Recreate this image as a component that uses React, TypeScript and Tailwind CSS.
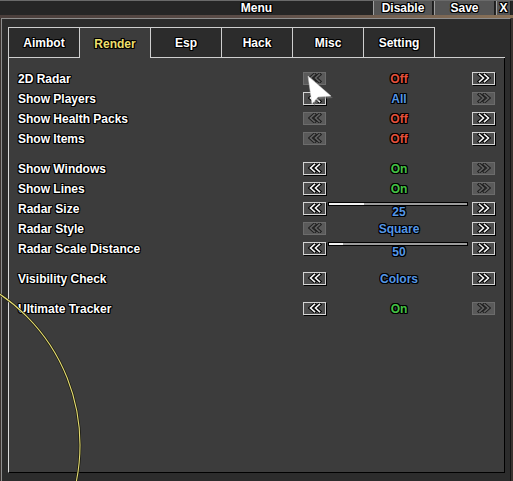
import React from 'react';

// black 1px outline round the pixel-style text
const OUTLINE =
  '[text-shadow:-1px_0_0_#000,1px_0_0_#000,0_-1px_0_#000,0_1px_0_#000,1px_1px_0_#000,-1px_-1px_0_#000,1px_-1px_0_#000,-1px_1px_0_#000]';

type Row =
  | { spacer: true }
  | {
      spacer?: false;
      label: string;
      value: string;
      color: 'red' | 'blue' | 'green';
      left: boolean;
      right: boolean;
      slider?: number;
    };

const rows: Row[] = [
  { label: '2D Radar', value: 'Off', color: 'red', left: false, right: true },
  { label: 'Show Players', value: 'All', color: 'blue', left: true, right: false },
  { label: 'Show Health Packs', value: 'Off', color: 'red', left: false, right: true },
  { label: 'Show Items', value: 'Off', color: 'red', left: false, right: true },
  { spacer: true },
  { label: 'Show Windows', value: 'On', color: 'green', left: true, right: false },
  { label: 'Show Lines', value: 'On', color: 'green', left: true, right: false },
  { label: 'Radar Size', value: '25', color: 'blue', left: true, right: true, slider: 25 },
  { label: 'Radar Style', value: 'Square', color: 'blue', left: false, right: true },
  { label: 'Radar Scale Distance', value: '50', color: 'blue', left: true, right: true, slider: 10 },
  { spacer: true },
  { label: 'Visibility Check', value: 'Colors', color: 'blue', left: true, right: true },
  { spacer: true },
  { label: 'Ultimate Tracker', value: 'On', color: 'green', left: true, right: false },
];

const tabs = ['Aimbot', 'Render', 'Esp', 'Hack', 'Misc', 'Setting'];

function Chevrons({ dir, enabled }: { dir: 'left' | 'right'; enabled: boolean }) {
  const lines =
    dir === 'left'
      ? ['6.5,1.5 2.5,5 6.5,8.5', '11.5,1.5 7.5,5 11.5,8.5']
      : ['2.5,1.5 6.5,5 2.5,8.5', '7.5,1.5 11.5,5 7.5,8.5'];
  return (
    <svg width="14" height="10" viewBox="0 0 14 10">
      {lines.map((p) => (
        <polyline
          key={'o' + p}
          points={p}
          fill="none"
          stroke={enabled ? '#000' : '#1e1e1e'}
          strokeWidth="3.6"
          strokeLinecap="square"
        />
      ))}
      {lines.map((p) => (
        <polyline
          key={'i' + p}
          points={p}
          fill="none"
          stroke={enabled ? '#f6f6f6' : '#626262'}
          strokeWidth="1.6"
          strokeLinecap="square"
        />
      ))}
    </svg>
  );
}

function ArrowButton({ dir, enabled }: { dir: 'left' | 'right'; enabled: boolean }) {
  return (
    <div
      className={`w-[23px] h-[13px] flex items-center justify-center ${
        enabled
          ? 'bg-[#4e4e4e] border border-[#d4d4d4] shadow-[1px_1px_0_#000]'
          : 'bg-[#5a5a5a] border border-[#6c6c6c]'
      }`}
    >
      <Chevrons dir={dir} enabled={enabled} />
    </div>
  );
}

export default function App() {
  const valueColor = {
    red: 'text-[#e4503c]',
    blue: 'text-[#5597e6]',
    green: 'text-[#45c245]',
  };

  return (
    <div
      className="w-[513px] h-[481px] bg-[#3a3330] relative overflow-hidden select-none"
      style={{ fontFamily: '"Liberation Sans", Arial, sans-serif' }}
    >
      {/* Title bar */}
      <div className="h-[15px] bg-[#262626] border-t border-[#6a6a6a] grid grid-cols-[1fr_auto_1fr]">
        <div />
        <div className={`text-white text-[12px] font-bold leading-[14px] ${OUTLINE}`}>Menu</div>
        <div className="flex justify-end">
          {['Disable', 'Save', 'X'].map((b, i) => (
            <div
              key={b}
              className={`h-[14px] bg-[#555555] border-l border-[#a0a0a0] border-r border-r-[#1e1e1e] flex items-center justify-center text-white text-[12px] font-bold leading-none ${OUTLINE} ${
                i === 0 ? 'w-[60px]' : i === 1 ? 'w-[61px] ml-[1px]' : 'w-[15px] ml-[1px] mr-[2px]'
              }`}
            >
              {b}
            </div>
          ))}
        </div>
      </div>
      <div className="h-[3px] bg-gradient-to-r from-[#4a3e3b] via-[#5c4d48] to-[#8a7258]" />

      {/* Window frame */}
      <div className="ml-[1px] w-[510px] h-[463px] bg-[#2c2c2c] border-t border-l border-[#8e8e8e] border-r border-r-[#141414] pl-[6px] pt-[8px]">
        {/* Tabs */}
        <div className="flex w-[497px] h-[31px]">
          {tabs.map((t, i) => {
            const active = t === 'Render';
            return (
              <div
                key={t}
                className={`w-[71px] shrink-0 border-l border-t border-[#cfcfcf] flex items-center justify-center text-[12px] font-bold leading-none pt-[1px] ${OUTLINE} ${
                  active ? 'bg-[#3c3c3c] text-[#ecdf6c]' : 'bg-[#2c2c2c] text-white border-b'
                } ${i === tabs.length - 1 ? 'border-r w-[72px]' : ''}`}
              >
                {t}
              </div>
            );
          })}
          <div className="flex-1 border-b border-[#cfcfcf]" />
        </div>

        {/* Panel */}
        <div className="w-[497px] h-[415px] bg-[#3c3c3c] border-l border-[#dcdcdc] border-r border-b border-r-black border-b-black pt-[10px] pl-[9px]">
          {rows.map((r, i) =>
            r.spacer ? (
              <div key={i} className="h-[10px]" />
            ) : (
              <div key={i} className="flex items-center h-[20px]">
                <div className={`w-[285px] mt-[2px] text-white text-[12px] font-bold leading-none ${OUTLINE}`}>
                  {r.label}
                </div>
                <ArrowButton dir="left" enabled={r.left} />
                {r.slider !== undefined ? (
                  <div className="w-[146px] h-[20px] flex flex-col items-start pt-[4px] pl-[2px]">
                    <div className="w-[140px] h-[5px] border border-black bg-[#9c9c9c]">
                      <div className="h-full bg-[#f2f2f2]" style={{ width: `${r.slider}%` }} />
                    </div>
                    <div
                      className={`w-[142px] mt-[1px] text-center text-[12px] font-bold leading-[11px] ${OUTLINE} ${valueColor[r.color]}`}
                    >
                      {r.value}
                    </div>
                  </div>
                ) : (
                  <div
                    className={`w-[146px] mt-[2px] text-center text-[12px] font-bold leading-none ${OUTLINE} ${valueColor[r.color]}`}
                  >
                    {r.value}
                  </div>
                )}
                <ArrowButton dir="right" enabled={r.right} />
              </div>
            )
          )}
        </div>
      </div>

      {/* Game overlay: radar ring and mouse pointer */}
      <svg className="absolute inset-0 pointer-events-none" width="513" height="481" viewBox="0 0 513 481">
        <circle cx="-102" cy="445" r="182" fill="none" stroke="#1a1a10" strokeWidth="2.6" />
        <circle cx="-102" cy="445" r="182" fill="none" stroke="#e4dc72" strokeWidth="1.1" />
        <polygon points="310,79 333,98 320,99 314,106" fill="#7a7a7a" opacity="0.6" />
        <polygon points="308,76 331,96 318,97 312,104" fill="#ffffff" stroke="#d0d0d0" strokeWidth="0.5" />
      </svg>
    </div>
  );
}
